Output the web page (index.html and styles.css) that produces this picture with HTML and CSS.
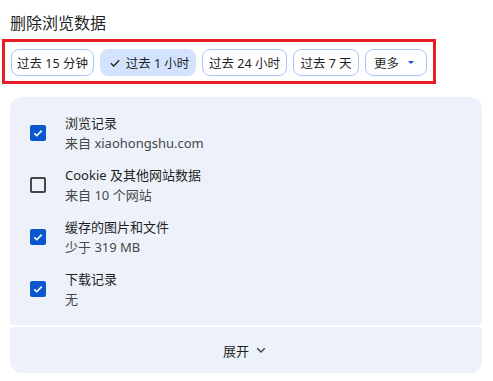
FILE: index.html
```html
<!DOCTYPE html>
<html lang="zh-CN">
<head>
<meta charset="utf-8">
<link rel="stylesheet" href="styles.css">
</head>
<body>
<div class="page">
  <div class="title">删除浏览数据</div>
  <div class="highlight">
    <div class="chips">
      <span class="chip c1">过去 15 分钟</span>
      <span class="chip selected c2"><svg class="tick" viewBox="0 0 10 10" width="10" height="10"><path d="M0.8 5.2 L3.7 8 L9.2 2.2" fill="none" stroke="#1f1f1f" stroke-width="1.3"/></svg>过去 1 小时</span>
      <span class="chip c3">过去 24 小时</span>
      <span class="chip c4">过去 7 天</span>
      <span class="chip more c5">更多<span class="caret"></span></span>
    </div>
  </div>
  <div class="card">
    <div class="row">
      <span class="box checked"><svg viewBox="0 0 16 16" width="16" height="16"><path d="M4.3 8.3 L6.8 10.7 L11.7 5.6" fill="none" stroke="#fff" stroke-width="1.6"/></svg></span>
      <div class="text"><div class="name">浏览记录</div><div class="sub">来自 xiaohongshu.com</div></div>
    </div>
    <div class="row">
      <span class="box"></span>
      <div class="text"><div class="name">Cookie 及其他网站数据</div><div class="sub">来自 10 个网站</div></div>
    </div>
    <div class="row">
      <span class="box checked"><svg viewBox="0 0 16 16" width="16" height="16"><path d="M4.3 8.3 L6.8 10.7 L11.7 5.6" fill="none" stroke="#fff" stroke-width="1.6"/></svg></span>
      <div class="text"><div class="name">缓存的图片和文件</div><div class="sub">少于 319 MB</div></div>
    </div>
    <div class="row">
      <span class="box checked"><svg viewBox="0 0 16 16" width="16" height="16"><path d="M4.3 8.3 L6.8 10.7 L11.7 5.6" fill="none" stroke="#fff" stroke-width="1.6"/></svg></span>
      <div class="text"><div class="name">下载记录</div><div class="sub">无</div></div>
    </div>
  </div>
  <div class="expand">
    <span>展开</span>
    <svg class="chev" viewBox="0 0 16 16" width="16" height="16"><path d="M4.2 6.3 L8 10 L11.8 6.3" fill="none" stroke="#474747" stroke-width="1.5"/></svg>
  </div>
</div>
</body>
</html>
```
FILE: styles.css
```css
* { box-sizing: border-box; }
body {
  margin: 0;
  background: #ffffff;
  font-family: "Noto Sans", "Noto Sans CJK SC", sans-serif;
  color: #1f1f1f;
}
.page {
  width: 493px;
}
.title {
  font-size: 16px;
  line-height: 23px;
  padding: 12px 0 0 10px;
  color: #1f1f1f;
}
.highlight {
  display: inline-block;
  margin: 4px 0 0 2px;
  border: 3px solid #ea1c24;
  padding: 7px 6px 5px 6px;
}
.chips {
  display: flex;
  gap: 6px;
}
.chip {
  display: inline-flex;
  align-items: center;
  justify-content: center;
  height: 27px;
  padding: 0;
  border: 1px solid #a8c7fa;
  border-radius: 8px;
  font-size: 12.5px;
  color: #1f1f1f;
  white-space: nowrap;
}
.c1 { width: 83px; }
.c2 { width: 96px; }
.c3 { width: 85px; }
.c4 { width: 66px; }
.c5 { width: 62px; }
.chip.selected {
  background: #d3e3fd;
  border-color: #d3e3fd;
  padding: 0 1px 0 4px;
}
.tick {
  margin-right: 6px;
}
.chip.more {
  justify-content: flex-start;
  padding: 0 0 0 8px;
}
.caret {
  width: 0;
  height: 0;
  margin-left: 9px;
  border-left: 3px solid transparent;
  border-right: 3px solid transparent;
  border-top: 3px solid #0b57d0;
}
.card {
  margin: 13px 11px 0 10px;
  background: #edf2fa;
  border-radius: 12px 12px 4px 4px;
  padding: 10px 0;
}
.row {
  display: flex;
  align-items: center;
  height: 52px;
  padding-left: 20px;
  gap: 19px;
}
.box {
  width: 16px;
  height: 16px;
  border-radius: 2px;
  border: 2px solid #474747;
  flex: none;
}
.box.checked {
  border: none;
  background: #0b57d0;
}
.box svg { display: block; }
.text {
  font-size: 13px;
  line-height: 20px;
}
.name { color: #1f1f1f; }
.sub { color: #474747; }
.expand {
  margin: 2px 11px 0 10px;
  height: 46px;
  background: #edf2fa;
  border-radius: 4px 4px 12px 12px;
  display: flex;
  align-items: center;
  justify-content: center;
  gap: 4px;
  font-size: 13px;
  color: #1f1f1f;
}
.chev { display: block; }
```
